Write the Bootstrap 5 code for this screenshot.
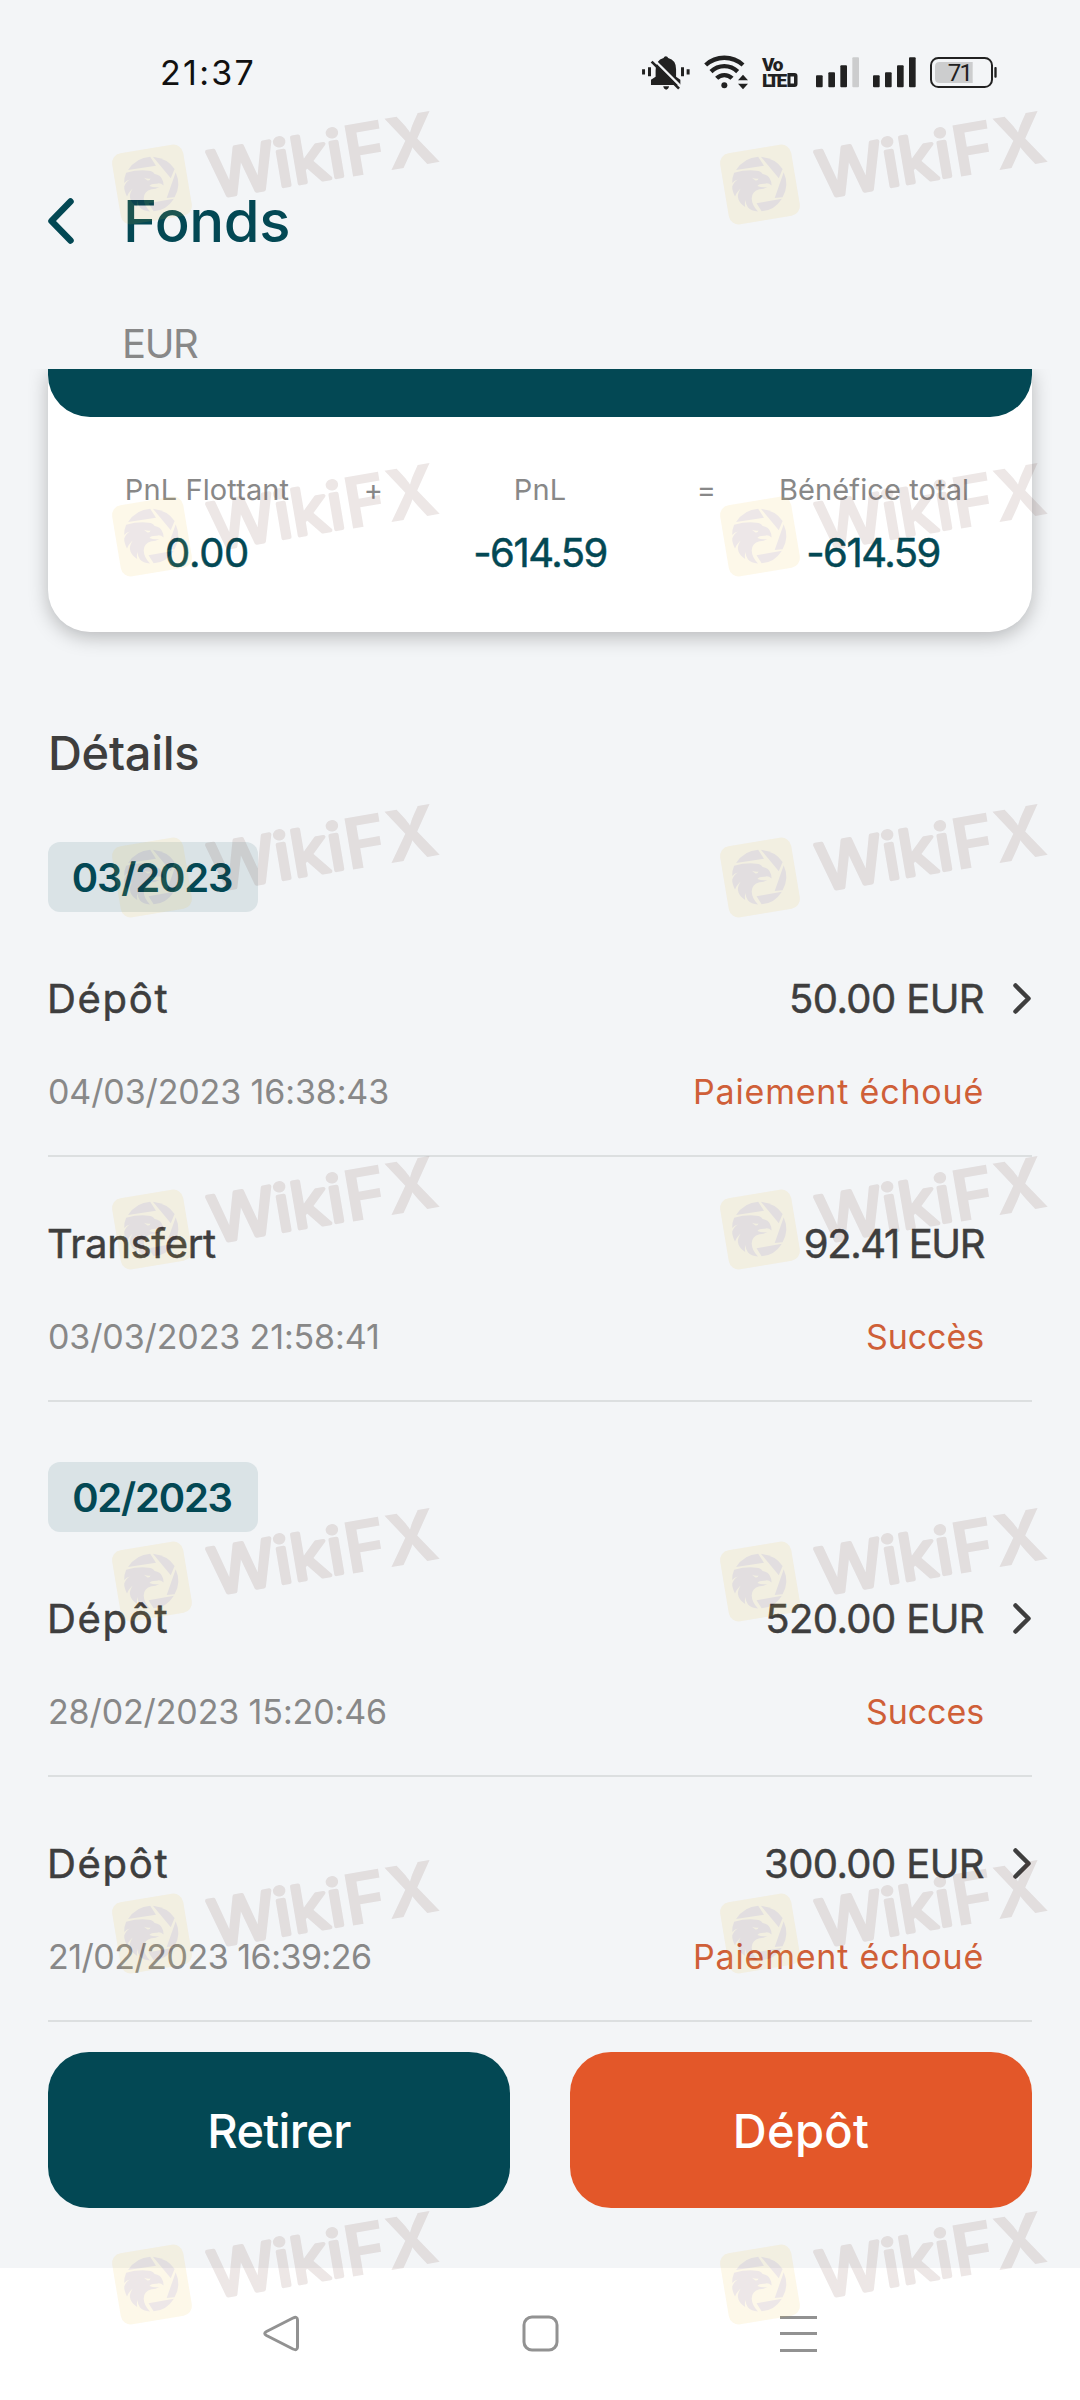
<!DOCTYPE html>
<html lang="fr">
<head>
<meta charset="utf-8">
<meta name="viewport" content="width=device-width, initial-scale=1">
<title>Fonds</title>
<link rel="stylesheet" href="https://cdn.jsdelivr.net/npm/bootstrap@5.3.0/dist/css/bootstrap.min.css">
<style>
  :root { --teal: #034854; --orange: #e35729; --ink: #3e3e3e; --muted: #888; --page: #f3f5f7; }
  body { font-family: Inter, "Liberation Sans", sans-serif; background: var(--page); color: var(--ink); line-height: 1; }
  .screen { width: 1080px; height: 2400px; }
  svg { display: block; flex: none; overflow: visible; }
  .statusbar { height: 145px; padding: 0 83px 0 160px; color: #111; }
  .clock { font-size: 34px; letter-spacing: 2.3px; }
  .app-head { height: 150px; padding-left: 48px; }
  .app-title { font-size: 58px; font-weight: 550; letter-spacing: -.4px; color: var(--teal); margin: 0 0 0 48px; padding-top: 3px; }
  .ccy { height: 74px; padding: 23px 0 0 122px; font-size: 40px; letter-spacing: -1.4px; line-height: 51px; color: var(--muted); }
  .summary-clip { height: 318px; overflow: hidden; padding: 0 48px; }
  .summary { height: 263px; background: #fff; border-radius: 0 0 42px 42px; box-shadow: 0 5px 19px rgba(0,0,0,.25); }
  .summary-top { height: 48px; background: var(--teal); border-radius: 0 0 42px 42px; }
  .sums { padding: 55px 65px; }
  .sum-col { width: 188px; }
  .sum-label { font-size: 29px; line-height: 36px; letter-spacing: .1px; color: var(--muted); white-space: nowrap; }
  .sum-value { font-size: 40px; line-height: 50px; margin-top: 20px; letter-spacing: -1.5px; color: var(--teal); -webkit-text-stroke: .5px; }
  .sum-zero { letter-spacing: -.3px; }
  .body-pad { padding: 0 48px; }
  .sec-title { height: 155px; padding-top: 41px; line-height: 50px; font-size: 47px; font-weight: 500; letter-spacing: -.3px; margin: 0; }
  .month { height: 70px; width: 210px; padding: 1px 2px 0 0; border-radius: 12px; background: #dae3e6; color: var(--teal); font-size: 40px; font-weight: 600; letter-spacing: -1.2px; }
  .month-next { margin-top: 60px; }
  .txn { height: 245px; padding-top: 57px; border-bottom: 2px solid #dcdfe0; }
  .txn-main { height: 60px; font-size: 40px; -webkit-text-stroke: .5px; }
  .txn-sub { height: 50px; margin-top: 38px; font-size: 34px; padding-right: 48px; }
  .kind { letter-spacing: 1.7px; margin-left: -1px; }
  .kind-b { letter-spacing: -.3px; }
  .amount { letter-spacing: -.6px; }
  .amount-b { letter-spacing: -1.4px; }
  .chev { width: 48px; }
  .chev svg { margin-top: -2px; }
  .when { color: var(--muted); letter-spacing: -.12px; }
  .when-b { letter-spacing: -.5px; }
  .state { color: #cf5f38; letter-spacing: .8px; }
  .state-b { letter-spacing: -.1px; }
  .actions { gap: 60px; padding-top: 30px; height: 246px; }
  .act { height: 156px; border-radius: 41px; border: 0; color: #fff; font-size: 47px; font-weight: 550; letter-spacing: -.7px; }
  .act-out { background: var(--teal); }
  .act-in { background: var(--orange); letter-spacing: .3px; }
  .sysnav { height: 132px; background: #fff; padding: 47px 263px 0; }
  .wm { left: 0; top: 0; pointer-events: none; }
</style>
</head>
<body>
<div class="screen position-relative overflow-hidden">

  <div class="statusbar d-flex align-items-center justify-content-between">
    <span class="clock">21:37</span>
    <div class="d-flex align-items-center" style="gap:14px">
      <svg width="48" height="34" viewBox="69 74 145 103" fill="#212121">
        <path d="M69 114h9v16h-9zM87 108h9v27h-9zM187 108h9v27h-9zM204 114h9v16h-9zM133 166h18q-3 10-9 10t-9-10z"/>
        <path d="M110 118Q110 86 134 80Q136 75 141 75Q146 75 148 80Q172 86 172 114V137L185 146V162H96V146L110 137Z"/>
        <path d="M104 84L190 170" stroke="#f3f5f7" stroke-width="7"/>
        <path d="M98 91L181 173" stroke="#212121" stroke-width="8"/>
      </svg>
      <svg width="44" height="35" viewBox="255 72 132 105" fill="none" stroke="#212121" stroke-width="13">
        <path d="M260 102A83 83 0 0 1 372 102M276 122A57 57 0 0 1 356 122M293 142A32 32 0 0 1 339 142"/>
        <circle cx="316" cy="163" r="9" fill="#212121" stroke="none"/>
        <path d="M372 131L387 148H357ZM357 158H387L372 175Z" fill="#212121" stroke="none"/>
      </svg>
      <svg class="me-1" width="36" height="31" viewBox="763 57 36 31" fill="#212121" font-family="Roboto, sans-serif" font-weight="900" font-size="19">
        <text letter-spacing="-1.500"><tspan x="763" y="71">Vo</tspan><tspan x="763" y="87" letter-spacing="-3">LTE</tspan></text>
        <path d="M788.500 73H795.500Q798.500 73 798.500 76V84Q798.500 87 795.500 87H788.500ZM791.500 76.500V83.500H795V76.500Z" fill-rule="evenodd"/>
      </svg>
      <svg width="43" height="31" viewBox="582 81 129 91" fill="#212121">
        <rect x="582" y="135" width="20" height="36" rx="3"/><rect x="619" y="126" width="20" height="45" rx="3"/><rect x="655" y="105" width="20" height="66" rx="3"/><rect x="691" y="81" width="20" height="90" rx="3" fill="#cccdce"/>
      </svg>
      <svg width="43" height="31" viewBox="754 81 129 91" fill="#212121">
        <rect x="754" y="135" width="20" height="36" rx="3"/><rect x="790" y="126" width="20" height="45" rx="3"/><rect x="826" y="105" width="20" height="66" rx="3"/><rect x="862" y="81" width="20" height="90" rx="3"/>
      </svg>
      <svg width="67" height="31" viewBox="930 81 201 93">
        <rect x="933" y="84" width="183" height="87" rx="22" fill="none" stroke="#212121" stroke-width="6"/>
        <path d="M959 96H1058V159H959Q945 159 945 146V109Q945 96 959 96Z" fill="#cccdce"/>
        <rect x="1123" y="111" width="7" height="32" rx="3" fill="#212121"/>
        <text x="983" y="153" font-family="Roboto, sans-serif" font-size="72" textLength="76" fill="#212121">71</text>
      </svg>
    </div>
  </div>

  <div class="app-head d-flex align-items-center">
    <svg width="27" height="48" viewBox="48 197 27 48" fill="none" stroke="#034854" stroke-width="6.500" stroke-linecap="round" stroke-linejoin="round"><path d="M70.500 202.500L51.500 222L70.500 241.500"/></svg>
    <h1 class="app-title">Fonds</h1>
  </div>
  <div class="ccy">EUR</div>

  <div class="summary-clip">
    <div class="summary">
      <div class="summary-top"></div>
      <div class="sums d-flex text-center">
        <div class="sum-col"><div class="sum-label">PnL Flottant</div><div class="sum-value sum-zero">0.00</div></div>
        <div class="sum-label flex-fill">+</div>
        <div class="sum-col"><div class="sum-label">PnL</div><div class="sum-value">-614.59</div></div>
        <div class="sum-label flex-fill">=</div>
        <div class="sum-col"><div class="sum-label">Bénéfice total</div><div class="sum-value">-614.59</div></div>
      </div>
    </div>
  </div>

  <div class="body-pad">
    <h2 class="sec-title">Détails</h2>

    <div class="month d-flex align-items-center justify-content-center">03/2023</div>
    <div class="txn">
      <div class="txn-main d-flex align-items-center">
        <span class="kind me-auto">Dépôt</span><span class="amount">50.00 EUR</span>
        <span class="chev d-flex justify-content-end"><svg width="19" height="31" viewBox="0 0 19 31" fill="none" stroke="#3e3e3e" stroke-width="4.500" stroke-linecap="round" stroke-linejoin="round"><path d="M2.500 2.500L15.500 15.500L2.500 28.500"/></svg></span>
      </div>
      <div class="txn-sub d-flex align-items-center justify-content-between"><span class="when">04/03/2023 16:38:43</span><span class="state">Paiement échoué</span></div>
    </div>
    <div class="txn">
      <div class="txn-main d-flex align-items-center">
        <span class="kind kind-b me-auto">Transfert</span><span class="amount amount-b">92.41 EUR</span><span class="chev"></span>
      </div>
      <div class="txn-sub d-flex align-items-center justify-content-between"><span class="when">03/03/2023 21:58:41</span><span class="state state-b">Succès</span></div>
    </div>

    <div class="month month-next d-flex align-items-center justify-content-center">02/2023</div>
    <div class="txn">
      <div class="txn-main d-flex align-items-center">
        <span class="kind me-auto">Dépôt</span><span class="amount">520.00 EUR</span>
        <span class="chev d-flex justify-content-end"><svg width="19" height="31" viewBox="0 0 19 31" fill="none" stroke="#3e3e3e" stroke-width="4.500" stroke-linecap="round" stroke-linejoin="round"><path d="M2.500 2.500L15.500 15.500L2.500 28.500"/></svg></span>
      </div>
      <div class="txn-sub d-flex align-items-center justify-content-between"><span class="when">28/02/2023 15:20:46</span><span class="state state-b">Succes</span></div>
    </div>
    <div class="txn">
      <div class="txn-main d-flex align-items-center">
        <span class="kind me-auto">Dépôt</span><span class="amount">300.00 EUR</span>
        <span class="chev d-flex justify-content-end"><svg width="19" height="31" viewBox="0 0 19 31" fill="none" stroke="#3e3e3e" stroke-width="4.500" stroke-linecap="round" stroke-linejoin="round"><path d="M2.500 2.500L15.500 15.500L2.500 28.500"/></svg></span>
      </div>
      <div class="txn-sub d-flex align-items-center justify-content-between"><span class="when when-b">21/02/2023 16:39:26</span><span class="state">Paiement échoué</span></div>
    </div>

    <div class="actions d-flex">
      <button class="act act-out flex-fill w-50" type="button">Retirer</button>
      <button class="act act-in flex-fill w-50" type="button">Dépôt</button>
    </div>
  </div>

  <div class="sysnav d-flex justify-content-between align-items-start">
    <svg width="37" height="37" viewBox="0 0 37 37" fill="none" stroke="#929292" stroke-width="3" stroke-linejoin="round"><path d="M3.500 16.500L30 3Q34.500 1 34.500 5V32Q34.500 36 30 34L3.500 20.500Q0 18.500 3.500 16.500Z"/></svg>
    <svg width="37" height="37" viewBox="0 0 37 37" fill="none" stroke="#929292" stroke-width="3"><rect x="2" y="2" width="33" height="33" rx="8"/></svg>
    <svg width="37" height="37" viewBox="0 0 37 37" stroke="#929292" stroke-width="3"><path d="M0 2.500H37M0 18.500H37M0 35.500H37"/></svg>
  </div>

  <!-- Tiled brand marks, laid over the whole screen -->
  <svg class="wm position-absolute" width="1080" height="2400" viewBox="0 0 1080 2400">
    <defs>
      <g id="brand">
        <rect x="-36" y="-36" width="72" height="72" rx="10" transform="rotate(-9.500)" fill="#edbe3a"/>
        <g fill="#5a2c30">
          <path d="M-23.900-14.500Q-16-27-1.800-27.800L4-18.800Z"/>
          <path d="M.9-27.800Q16-26 22.600-15.500L18.800-6.200Z"/>
          <path d="M23.700-12.200Q29.500 1 22.600 12.800L14.700 13.500Z"/>
          <path d="M21.900 14.200Q14.500 26 1.600 26.800L-3.500 18.800Z"/>
          <path d="M-25.900-11.800Q-14-15-3.500-13.800Q1-13.500 2.700-10.500Q8.500-9.500 10-5.500Q12-2 11.600 1Q8-2 5-.8Q-1-1-2.500 1.500Q2 3.500 7.500 2.500Q3 5-.5 4.800Q-8 6.500-8.300 14Q-8 21-2 27Q-9 26.500-12 23Q-14.500 19-14.500 15.500Q-15.500 19-14.800 22.500Q-20 19-21.500 15Q-23.500 11-19.500 4Q-23.500 8-25 12Q-28 6-27.800 2Q-26-3-22-5Q-25.500-4.500-27.800-1.500Q-28-7-25.900-11.800Z"/>
          <path d="M-8-6.800Q-4-5-1.500-6Q-2-3.500-4.500-4Z" fill="#edbe3a"/>
        </g>
        <g transform="translate(61.500 15.500) rotate(-9.600)" fill="#5a2820" stroke="#5a2820" stroke-linejoin="round" font-family="Inter, sans-serif">
          <text x="0" y="-2" font-size="64" font-weight="400" textLength="136" lengthAdjust="spacingAndGlyphs" stroke-width="4">Wiki</text>
          <text x="137" y="0" font-size="71" font-weight="700" textLength="94" lengthAdjust="spacingAndGlyphs" stroke-width="0">FX</text>
        </g>
      </g>
      <g id="pair"><use href="#brand" x="152"/><use href="#brand" x="760"/></g>
    </defs>
    <g opacity=".112">
      <use href="#pair" y="184.500"/><use href="#pair" y="536.500"/><use href="#pair" y="877.500"/><use href="#pair" y="1229.500"/><use href="#pair" y="1581.500"/><use href="#pair" y="1933.500"/><use href="#pair" y="2284.500"/>
    </g>
  </svg>
</div>
<script src="https://cdn.jsdelivr.net/npm/bootstrap@5.3.0/dist/js/bootstrap.bundle.min.js"></script>
</body>
</html>
